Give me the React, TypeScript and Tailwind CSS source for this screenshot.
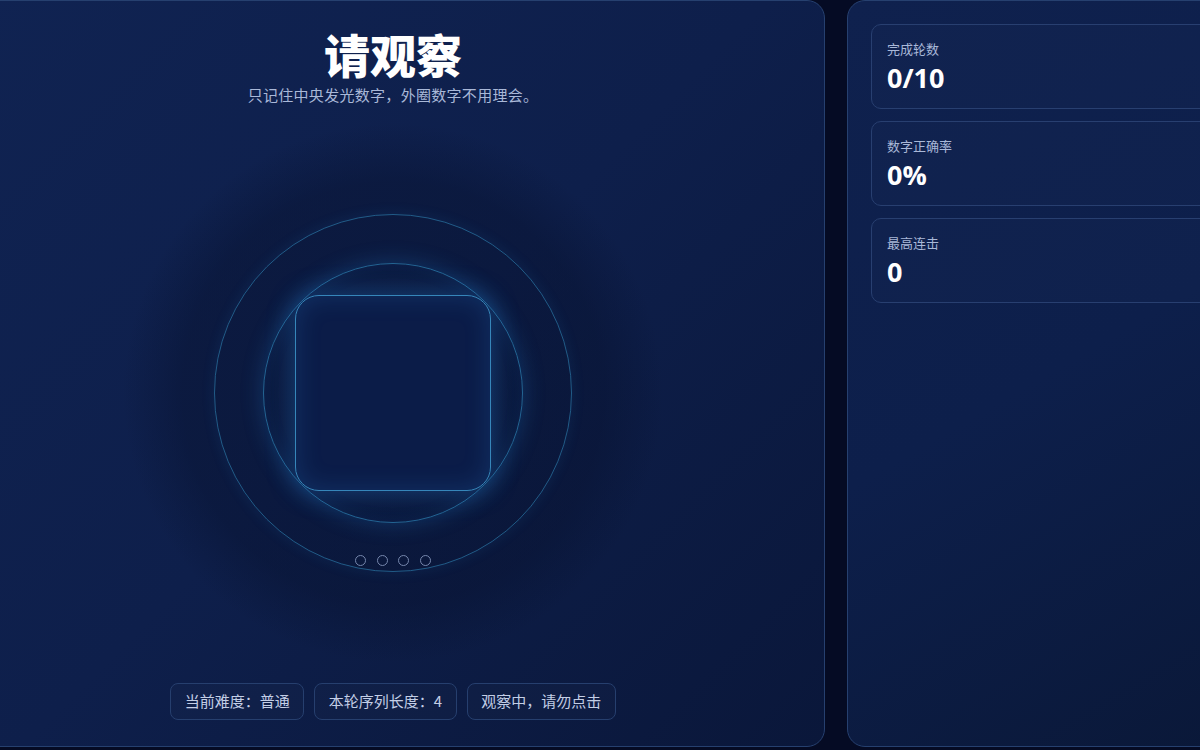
const stats = [
  { label: "完成轮数", value: "0/10" },
  { label: "数字正确率", value: "0%" },
  { label: "最高连击", value: "0" },
];

const chips = ["当前难度：普通", "本轮序列长度：4", "观察中，请勿点击"];

function Stage() {
  return (
    <div className="relative mt-[18px] grid h-[540px] w-[540px] place-items-center rounded-full bg-[radial-gradient(circle_closest-side,rgba(7,17,46,0.45)_0%,rgba(7,17,46,0.42)_78%,rgba(7,17,46,0)_100%)]">
      <div className="[grid-area:1/1] h-[358px] w-[358px] rounded-full border border-[#2b77a6]/70 shadow-[0_0_14px_rgba(40,130,210,0.12)]" />
      <div className="[grid-area:1/1] h-[260px] w-[260px] rounded-full border border-[#2f86b8]/70 shadow-[0_0_22px_rgba(40,135,215,0.28),inset_0_0_16px_rgba(40,135,215,0.12)]" />
      <div className="[grid-area:1/1] h-[196px] w-[196px] rounded-[24px] border-[1.5px] border-[#3686ba] bg-[#0b1c48] shadow-[0_0_28px_rgba(45,140,225,0.38),inset_0_0_26px_rgba(45,140,225,0.2)]" />
      <div className="absolute left-0 right-0 top-[432px] flex justify-center gap-[10.5px]">
        {[0, 1, 2, 3].map((i) => (
          <span key={i} className="h-[11px] w-[11px] rounded-full border-[1.5px] border-[#7687ad]" />
        ))}
      </div>
    </div>
  );
}

export default function App() {
  return (
    <div className="flex h-[750px] gap-[22px] overflow-hidden bg-[#050b24] pb-[3px] font-['Noto_Sans_CJK_SC','Noto_Sans',sans-serif]">
      <section className="-ml-[39px] flex h-[747px] w-[864px] shrink-0 flex-col items-center rounded-[18px] border border-[#26406f] bg-[linear-gradient(135deg,#102352_0%,#0e1f4b_50%,#0a173a_100%)] pt-[25px]">
        <h1 className="text-[46px] font-black leading-[54px] text-white">请观察</h1>
        <p className="mt-[5px] text-[15px] leading-[20px] tracking-[0.3px] text-[#a9b8d8]">
          只记住中央发光数字，外圈数字不用理会。
        </p>
        <Stage />
        <div className="mt-[20px] flex gap-[10px]">
          {chips.map((c) => (
            <div
              key={c}
              className="flex h-[37px] items-center rounded-[8px] border border-[#263f6e] bg-white/[0.015] px-[13.5px] text-[15px] text-[#c3cee6]"
            >
              {c}
            </div>
          ))}
        </div>
      </section>

      <aside className="flex h-[747px] w-[400px] shrink-0 flex-col gap-[12px] rounded-[18px] border border-[#26406f] bg-[linear-gradient(150deg,#0f214e_0%,#0d1f4b_50%,#0a1838_100%)] p-[23px]">
        {stats.map((s) => (
          <div
            key={s.label}
            className="flex h-[85px] flex-col rounded-[10px] border border-[#283f70] bg-white/[0.01] px-[15px] pt-[15px]"
          >
            <span className="text-[13px] leading-[17px] text-[#a9b8d8]">{s.label}</span>
            <span className="mt-[3px] font-['Open_Sans','Noto_Sans',sans-serif] text-[27px] font-bold leading-[35px] text-white">
              {s.value}
            </span>
          </div>
        ))}
      </aside>
    </div>
  );
}
